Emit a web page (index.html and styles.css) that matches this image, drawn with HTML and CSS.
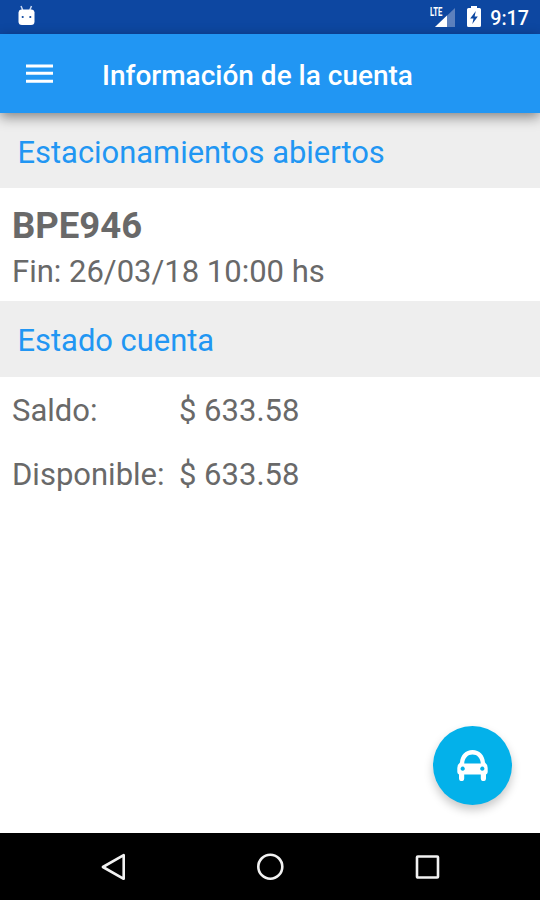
FILE: index.html
```html
<!DOCTYPE html>
<html lang="es">
<head>
<meta charset="utf-8">
<title>Información de la cuenta</title>
<link rel="stylesheet" href="styles.css">
</head>

<body>
<div class="statusbar">
  <svg class="debug" width="17" height="21" viewBox="0 0 17 21">
    <path d="M3 1l1.700 4M13.500 1l-1.700 4" stroke="#c9d8f2" stroke-width="1.500"/>
    <path d="M3 4.500h11q2.500.5 2.500 3v9q0 3.500-3.500 3.500h-9q-3.500 0-3.500-3.500v-9q0-2.500 2.500-3z" fill="#fff"/>
    <circle cx="4.700" cy="12" r="1.100" fill="#0d47a1"/>
    <circle cx="12.300" cy="12" r="1.100" fill="#0d47a1"/>
  </svg>
  <div class="signal">
    <svg width="20" height="19" viewBox="0 0 20 19">
      <path d="M20 0v19H0z" fill="#5c80bd"/>
      <path d="M12 7.600v11.400H0z" fill="#fff"/>
    </svg>
    <span class="lte">LTE</span>
  </div>
  <svg class="battery" width="14" height="21" viewBox="0 0 14 21">
    <path d="M4 0h6v2h2.500q1.500 0 1.500 1.500v16q0 1.500-1.500 1.500h-11q-1.500 0-1.500-1.500v-16q0-1.500 1.500-1.500h2.500z" fill="#fff"/>
    <path d="M8.800 5L3.200 12.600h3.300L5.300 18l5.500-7.600H7.600z" fill="#0d47a1"/>
  </svg>
  <span class="clock">9:17</span>
</div>

<header class="toolbar">
  <svg class="menu" width="27" height="20" viewBox="0 0 27 20">
    <path d="M0 1.900h27M0 9.300h27M0 17.200h27" stroke="#fff" stroke-width="3"/>
  </svg>
  <h1>Información de la cuenta</h1>
</header>

<main>
  <h2 class="first"><span>Estacionamientos abiertos</span></h2>
  <div class="parking">
    <div class="plate"><span>BPE946</span></div>
    <div class="end"><span>Fin: 26/03/18 10:00 hs</span></div>
  </div>

  <h2><span>Estado cuenta</span></h2>
  <dl class="account">
    <dt>Saldo:</dt>
    <dd>$ 633.58</dd>
    <dt>Disponible:</dt>
    <dd>$ 633.58</dd>
  </dl>

  <div class="fab">
    <svg width="31" height="31" viewBox="0 0 31 31">
      <path fill="#fff" fill-rule="evenodd" d="M15.500 0C8.500 0 3.500 5 3 12.500Q.3 14.500.3 18v4q0 1.800 1.700 2.500v4a2.500 2.500 0 0 0 5.200 0V24.500h16.600v4a2.500 2.500 0 0 0 5.200 0v-4q1.700-.7 1.700-2.500v-4q0-3.500-2.700-5.500C27.500 5 22.500 0 15.500 0zM7.200 13.500C7.600 8 10.800 4.600 15.500 4.600s7.900 3.400 8.300 8.900zM5.700 16.600a2.100 2.100 0 1 0 .01 0zM25.300 16.600a2.100 2.100 0 1 0 .01 0z"/>
    </svg>
  </div>
</main>

<nav class="navbar">
  <svg width="26" height="28" viewBox="0 0 26 28">
    <path d="M23.700 2.200v23.600L2.900 14z" fill="none" stroke="#f2f2f2" stroke-width="2.600" stroke-linejoin="round"/>
  </svg>
  <svg width="28" height="28" viewBox="0 0 28 28">
    <circle cx="14.300" cy="13.700" r="12" fill="none" stroke="#f2f2f2" stroke-width="2.600"/>
  </svg>
  <svg width="26" height="28" viewBox="0 0 26 28">
    <rect x="3" y="3.500" width="21" height="21" rx=".8" fill="none" stroke="#f2f2f2" stroke-width="2.600"/>
  </svg>
</nav>
</body>
</html>
```

FILE: styles.css
```css
* {
  box-sizing: border-box;
}

body {
  margin: 0;
  height: 900px;
  display: flex;
  flex-direction: column;
  overflow: hidden;
  background: #fff;
  color: #696969;
  font-family: Roboto, sans-serif;
}

h1, h2, dl, dd {
  margin: 0;
  font-weight: 400;
}

svg {
  display: block;
  flex: none;
}

.statusbar {
  height: 34px;
  padding: 0 11px 0 18px;
  display: flex;
  align-items: flex-start;
  background: #0d47a1;
  color: #fff;
}

.debug {
  margin-top: 5px;
}

.signal {
  position: relative;
  margin: 8px 12px 0 auto;
}

.lte {
  position: absolute;
  left: -5px;
  top: -2px;
  font-size: 12px;
  line-height: 12px;
  font-weight: 700;
  transform: scaleX(0.64);
  transform-origin: 0 0;
}

.battery {
  margin: 6px 9px 0 0;
}

.clock {
  font-size: 19.700px;
  line-height: 38px;
  font-weight: 500;
}

.toolbar {
  position: relative;
  z-index: 1;
  height: 79px;
  padding-left: 26px;
  display: flex;
  align-items: center;
  background: #2196f3;
  box-shadow: 0 4px 12px rgba(0, 0, 0, 0.45);
}

.menu {
  margin-right: 49px;
}

h1 {
  color: #fff;
  font-size: 28px;
  line-height: 36px;
  font-weight: 500;
  padding-top: 4px;
}

main {
  flex: 1;
  position: relative;
}

h2 {
  height: 76px;
  padding: 2px 0 0 17.500px;
  background: #eee;
  color: #2196f3;
  font-size: 30.900px;
  line-height: 76px;
}

h2.first {
  height: 75px;
}

.parking {
  height: 113px;
  padding: 16px 12px 0;
}

.plate {
  font-size: 36.500px;
  line-height: 44px;
  font-weight: 700;
}

.end {
  font-size: 31px;
  line-height: 47px;
}

.account {
  display: grid;
  grid-template-columns: 167px auto;
  grid-auto-rows: 64px;
  padding: 2px 12px;
  font-size: 31px;
  line-height: 64px;
}

.fab {
  position: absolute;
  right: 28px;
  bottom: 28px;
  width: 79px;
  height: 79px;
  display: flex;
  align-items: center;
  justify-content: center;
  border-radius: 50%;
  background: #03b1ea;
  box-shadow: 0 5px 10px rgba(0, 0, 0, 0.22);
}

.navbar {
  height: 67px;
  padding: 0 100px;
  display: flex;
  align-items: center;
  justify-content: space-between;
  background: #000;
}
```
